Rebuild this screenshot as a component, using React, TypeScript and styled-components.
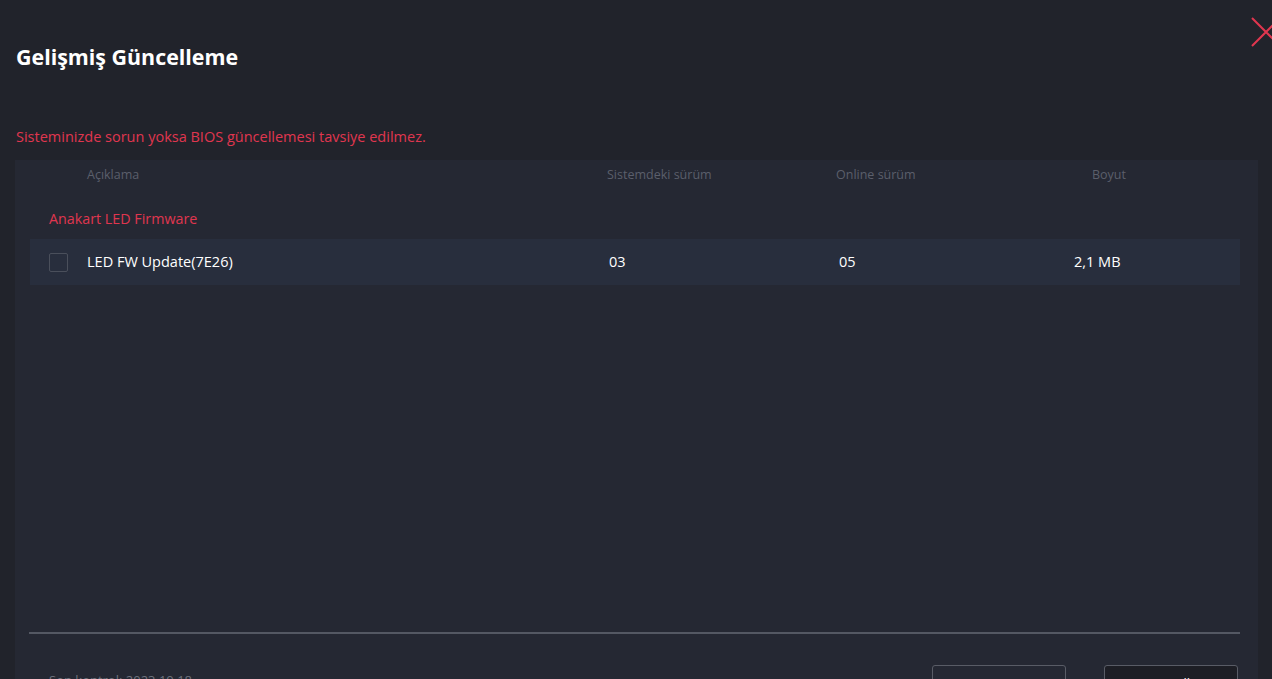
import styled, { createGlobalStyle } from 'styled-components'

const GlobalStyle = createGlobalStyle`
  html, body {
    margin: 0;
    padding: 0;
    background: #21232b;
    overflow: hidden;
  }
  * {
    box-sizing: border-box;
  }
`;

const columns = [
  { label: 'Açıklama', width: 520 },
  { label: 'Sistemdeki sürüm', width: 229 },
  { label: 'Online sürüm', width: 256 },
  { label: 'Boyut', width: 140 },
]

function App() {
  return (
    <>
      <GlobalStyle />
      <Dialog>
        <CloseButton aria-label="Kapat">
          <svg width="30" height="30" viewBox="0 0 30 30">
            <path d="M1 1 L29 29 M29 1 L1 29" stroke="#e0364f" strokeWidth="2" fill="none" />
          </svg>
        </CloseButton>
        <Title>Gelişmiş Güncelleme</Title>
        <Warning>Sisteminizde sorun yoksa BIOS güncellemesi tavsiye edilmez.</Warning>
        <Panel>
          <HeaderRow>
            {columns.map(c => (
              <HeaderCell key={c.label} $w={c.width}>
                {c.label}
              </HeaderCell>
            ))}
          </HeaderRow>
          <GroupLabel>Anakart LED Firmware</GroupLabel>
          <ItemRow>
            <Checkbox />
            <Cell $w={522}>LED FW Update(7E26)</Cell>
            <Cell $w={230}>03</Cell>
            <Cell $w={235}>05</Cell>
            <Cell $w={140}>2,1 MB</Cell>
          </ItemRow>
          <Spacer />
          <Divider />
          <Footer>
            <LastCheck>Son kontrol: 2023.10.18</LastCheck>
            <Buttons>
              <Button>Tara</Button>
              <Button $dark>Güncelle</Button>
            </Buttons>
          </Footer>
        </Panel>
      </Dialog>
    </>
  )
}

export default App

const Dialog = styled.div`
  position: relative;
  height: 679px;
  width: 1272px;
  overflow: hidden;
  display: flex;
  flex-direction: column;
  font-family: 'Open Sans', 'Noto Sans', sans-serif;
  background: #21232b;
`;

const CloseButton = styled.button`
  position: absolute;
  top: 17px;
  right: -9px;
  background: none;
  border: 0;
  padding: 0;
  line-height: 0;
`;

const Title = styled.h1`
  margin: 42px 0 0 16px;
  font-size: 21.4px;
  line-height: 30px;
  font-weight: 700;
  color: #ffffff;
`;

const Warning = styled.div`
  margin: 55px 0 0 16px;
  font-size: 14.5px;
  line-height: 20px;
  color: #e0364f;
`;

const Panel = styled.section`
  flex: 1;
  margin: 13px 14px 0 15px;
  background: #252833;
  display: flex;
  flex-direction: column;
  padding: 0 18px 0 14px;
`;

const HeaderRow = styled.div`
  display: flex;
  padding: 7px 0 0 58px;
  height: 30px;
`;

const HeaderCell = styled.div<{ $w: number }>`
  width: ${p => p.$w}px;
  font-size: 12.5px;
  line-height: 16px;
  color: #5b5f6b;
`;

const GroupLabel = styled.div`
  padding: 19px 0 0 20px;
  height: 49px;
  font-size: 14.3px;
  line-height: 20px;
  color: #e0364f;
`;

const ItemRow = styled.div`
  display: flex;
  align-items: center;
  height: 46px;
  margin-left: 1px;
  padding-left: 19px;
  background: #282e3d;
  color: #ffffff;
  font-size: 14.5px;
`;

const Checkbox = styled.div`
  width: 19px;
  height: 19px;
  border: 1px solid #4a4f5b;
  border-radius: 2px;
  margin-right: 19px;
`;

const Cell = styled.div<{ $w: number }>`
  width: ${p => p.$w}px;
  line-height: 18px;
`;

const Spacer = styled.div`
  flex: 1;
`;

const Divider = styled.div`
  height: 2px;
  background: #545863;
`;

const Footer = styled.div`
  display: flex;
  justify-content: space-between;
  height: 45px;
  padding: 31px 2px 0 20px;
`;

const LastCheck = styled.div`
  font-size: 13px;
  line-height: 18px;
  padding-top: 6px;
  color: #6d717c;
`;

const Buttons = styled.div`
  display: flex;
  gap: 38px;
`;

const Button = styled.button<{ $dark?: boolean }>`
  width: 134px;
  height: 34px;
  border: 1px solid #595c66;
  border-radius: 3px;
  background: ${p => (p.$dark ? '#1d1e25' : 'transparent')};
  color: #ffffff;
  font-family: inherit;
  font-size: 13px;
  padding-top: 2px;
`;
